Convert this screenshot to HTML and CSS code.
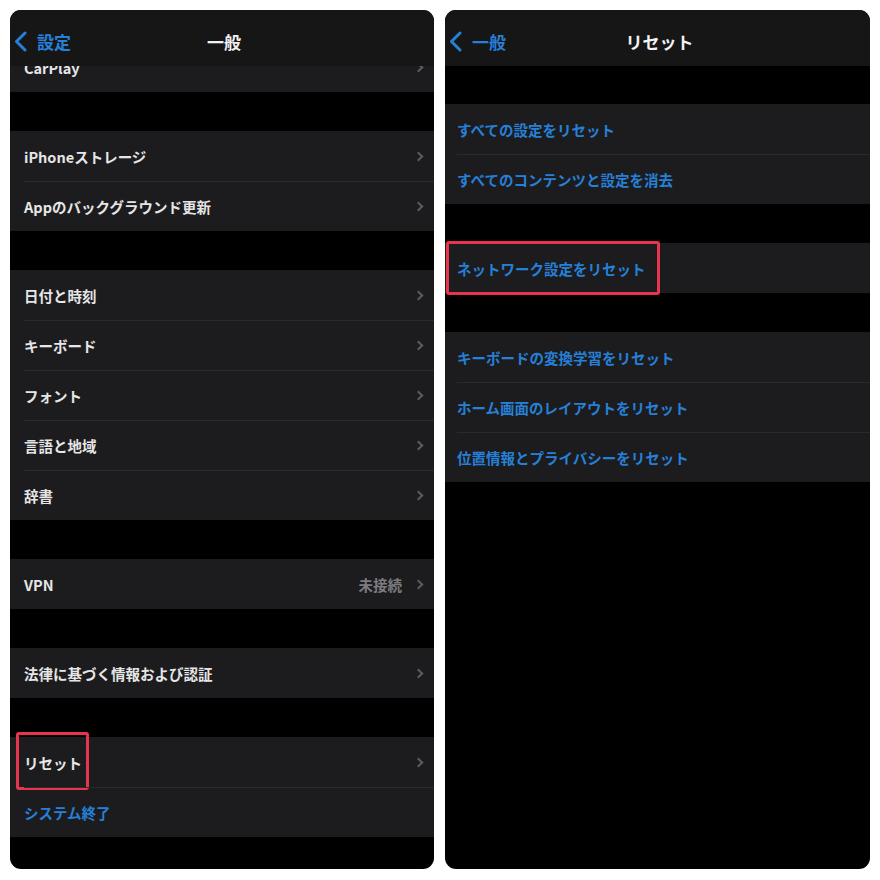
FILE: index.html
```html
<!DOCTYPE html>
<html lang="ja">
<head>
  <meta charset="UTF-8">
  <meta name="viewport" content="width=device-width, initial-scale=1.0">
  <title>一般 / リセット</title>
  <link rel="stylesheet" href="styles.css">
</head>
<body>
  <div class="shots">

    <!-- left: 一般 -->
    <section class="phone general">
      <header class="nav">
        <a class="back" href="#">
          <svg width="13" height="21" viewBox="0 0 13 21"><polyline points="11,2 2.5,10.5 11,19" /></svg>
          設定
        </a>
        <h1>一般</h1>
        <span></span>
      </header>

      <div class="group scrolled">
        <div class="row"><div class="row-in"><span class="label">CarPlay</span><i class="chev"></i></div></div>
      </div>

      <div class="group">
        <div class="row"><div class="row-in"><span class="label">iPhoneストレージ</span><i class="chev"></i></div></div>
        <div class="row"><div class="row-in"><span class="label">Appのバックグラウンド更新</span><i class="chev"></i></div></div>
      </div>

      <div class="group">
        <div class="row"><div class="row-in"><span class="label">日付と時刻</span><i class="chev"></i></div></div>
        <div class="row"><div class="row-in"><span class="label">キーボード</span><i class="chev"></i></div></div>
        <div class="row"><div class="row-in"><span class="label">フォント</span><i class="chev"></i></div></div>
        <div class="row"><div class="row-in"><span class="label">言語と地域</span><i class="chev"></i></div></div>
        <div class="row"><div class="row-in"><span class="label">辞書</span><i class="chev"></i></div></div>
      </div>

      <div class="group">
        <div class="row"><div class="row-in"><span class="label">VPN</span><span class="value">未接続</span><i class="chev"></i></div></div>
      </div>

      <div class="group">
        <div class="row"><div class="row-in"><span class="label">法律に基づく情報および認証</span><i class="chev"></i></div></div>
      </div>

      <div class="group">
        <div class="row marked">
          <div class="row-in"><span class="label">リセット</span><i class="chev"></i></div>
          <span class="highlight hl-left"></span>
        </div>
        <div class="row"><div class="row-in"><span class="label action">システム終了</span></div></div>
      </div>
    </section>

    <!-- right: リセット -->
    <section class="phone reset">
      <header class="nav">
        <a class="back" href="#">
          <svg width="13" height="21" viewBox="0 0 13 21"><polyline points="11,2 2.5,10.5 11,19" /></svg>
          一般
        </a>
        <h1>リセット</h1>
        <span></span>
      </header>

      <div class="group first">
        <div class="row"><div class="row-in"><span class="label action">すべての設定をリセット</span></div></div>
        <div class="row"><div class="row-in"><span class="label action">すべてのコンテンツと設定を消去</span></div></div>
      </div>

      <div class="group">
        <div class="row marked">
          <div class="row-in"><span class="label action">ネットワーク設定をリセット</span></div>
          <span class="highlight hl-right"></span>
        </div>
      </div>

      <div class="group">
        <div class="row"><div class="row-in"><span class="label action">キーボードの変換学習をリセット</span></div></div>
        <div class="row"><div class="row-in"><span class="label action">ホーム画面のレイアウトをリセット</span></div></div>
        <div class="row"><div class="row-in"><span class="label action">位置情報とプライバシーをリセット</span></div></div>
      </div>
    </section>

  </div>
</body>
</html>
```

FILE: styles.css
```css
* {
  box-sizing: border-box;
}
body {
  margin: 0;
  background-color: #fff;
  font-family: "Noto Sans CJK JP", "Noto Sans", sans-serif;
}
.shots {
  display: flex;
  gap: 11px;
  padding: 10px 10px 0 10px;
}
.phone {
  height: 859px;
  background-color: #000;
  border-radius: 11px;
  overflow: hidden;
}
.phone.general {
  width: 424px;
}
.phone.reset {
  width: 425px;
}

/* nav bar */
.nav {
  display: grid;
  grid-template-columns: 1fr auto 1fr;
  align-items: center;
  height: 56px;
  padding: 6px 0 0 4px;
  background-color: #161617;
}
.nav h1 {
  margin: 0;
  font-size: 17px;
  font-weight: 700;
  color: #f2f2f2;
}
.back {
  display: flex;
  align-items: center;
  gap: 10px;
  font-size: 17px;
  font-weight: 700;
  color: #2680d8;
  text-decoration: none;
}
.back svg polyline {
  fill: none;
  stroke: #2680d8;
  stroke-width: 3;
  stroke-linecap: round;
  stroke-linejoin: round;
}

/* lists */
.group {
  margin-top: 39px;
  background-color: #1c1c1e;
}
.group.scrolled {
  margin-top: 0;
  height: 26px;
  overflow: hidden;
}
.group.scrolled .row {
  margin-top: -24px;
}
.group.first {
  margin-top: 38px;
}
.row {
  position: relative;
  padding-left: 14px;
}
.reset .row {
  padding-left: 12px;
}
.row-in {
  display: flex;
  align-items: center;
  height: 50px;
  padding-right: 9px;
  border-top: 1px solid #2a2a2c;
}
.row:first-child .row-in {
  border-top: none;
}
.label {
  flex: 1;
  font-size: 14.5px;
  font-weight: 700;
  color: #e6e6e6;
}
.label.action {
  color: #2680d8;
}
.value {
  margin-right: 13px;
  font-size: 14.5px;
  font-weight: 700;
  color: #7c7c80;
}
.chev {
  width: 7px;
  height: 7px;
  margin-right: 3px;
  border-top: 2px solid #5b5b5f;
  border-right: 2px solid #5b5b5f;
  transform: rotate(45deg);
}

/* red annotation boxes */
.highlight {
  position: absolute;
  border: 3px solid #e8354f;
  border-radius: 3px;
}
.hl-left {
  left: 6px;
  top: -5px;
  width: 73px;
  height: 58px;
}
.hl-right {
  left: 1px;
  top: -2px;
  width: 214px;
  height: 54px;
}
```
